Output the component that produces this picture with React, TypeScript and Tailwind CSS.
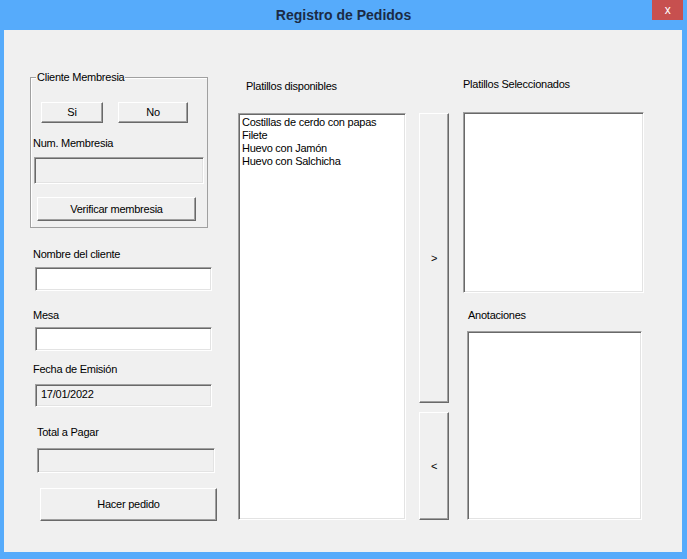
import React from "react";

// classic VBA userform look: raised buttons, sunken text boxes
const btn =
  "flex items-center justify-center bg-[#f0f0f0] border border-t-white border-l-white border-b-[#696969] border-r-[#696969] shadow-[inset_-1px_-1px_0_#a0a0a0] text-[11px] text-black";
const sunken =
  "border border-t-[#a0a0a0] border-l-[#a0a0a0] border-b-white border-r-white shadow-[inset_1px_1px_0_#696969,inset_-1px_-1px_0_#e3e3e3]";

const platillos = [
  "Costillas de cerdo con papas",
  "Filete",
  "Huevo con Jamón",
  "Huevo con Salchicha",
];

function Label({ text, className = "" }: { text: string; className?: string }) {
  return <div className={`h-[13px] leading-[13px] whitespace-nowrap ${className}`}>{text}</div>;
}

export default function App() {
  return (
    <div className="w-[687px] h-[559px] bg-[#56abfb] flex flex-col font-['Liberation_Sans',Arial,sans-serif] text-[11px] leading-[13px] tracking-[-0.25px] text-black">
      {/* title bar */}
      <div className="h-[30px] flex items-start">
        <div className="w-[35px]" />
        <div className="flex-1 h-[30px] flex items-center justify-center text-[14px] font-bold tracking-normal text-[#1b2b45]">
          Registro de Pedidos
        </div>
        <div className="w-[31px] h-[20px] mr-[4px] bg-[#c7504f] flex items-center justify-center text-white text-[12px] leading-none pb-[1px]">
          x
        </div>
      </div>

      {/* client area */}
      <div className="ml-[4px] w-[678px] h-[522px] bg-[#f0f0f0] flex items-start pl-[26px]">
        {/* left column */}
        <div className="w-[190px] flex flex-col">
          <div className="relative mt-[47px] w-[178px] h-[151px] border border-[#a0a0a0] shadow-[inset_1px_1px_0_white] flex flex-col">
            <span className="absolute -top-[7px] left-[5px] px-[1px] bg-[#f0f0f0] leading-[13px]">
              Cliente Membresia
            </span>
            <div className="mt-[24px] ml-[10px] flex gap-[15px]">
              <div className={`${btn} w-[62px] h-[21px]`}>Si</div>
              <div className={`${btn} w-[70px] h-[21px]`}>No</div>
            </div>
            <Label text="Num. Membresia" className="mt-[14px] ml-[2px]" />
            <div className={`${sunken} mt-[7px] ml-[3px] w-[170px] h-[27px] bg-[#f0f0f0]`} />
            <div className={`${btn} mt-[13px] ml-[6px] w-[159px] h-[24px]`}>Verificar membresia</div>
          </div>

          <Label text="Nombre del cliente" className="mt-[20px] ml-[3px]" />
          <div className={`${sunken} mt-[6px] ml-[5px] w-[177px] h-[24px] bg-white`} />

          <Label text="Mesa" className="mt-[18px] ml-[3px]" />
          <div className={`${sunken} mt-[5px] ml-[5px] w-[177px] h-[24px] bg-white`} />

          <Label text="Fecha de Emisión" className="mt-[12px] ml-[3px]" />
          <div className={`${sunken} mt-[8px] ml-[5px] w-[177px] h-[23px] bg-[#f0f0f0] flex items-center pl-[5px] pb-[2px]`}>
            17/01/2022
          </div>

          <Label text="Total a Pagar" className="mt-[19px] ml-[7px]" />
          <div className={`${sunken} mt-[9px] ml-[7px] w-[178px] h-[25px] bg-[#f0f0f0]`} />

          <div className={`${btn} mt-[15px] ml-[10px] w-[177px] h-[33px]`}>Hacer pedido</div>
        </div>

        {/* available dishes */}
        <div className="ml-[17px] w-[169px] flex flex-col">
          <Label text="Platillos disponibles" className="mt-[50px] ml-[9px]" />
          <div className={`${sunken} mt-[20px] ml-[1px] w-[168px] h-[407px] bg-white pt-[2px] pl-[3px] flex flex-col`}>
            {platillos.map((p) => (
              <div key={p} className="leading-[13px] whitespace-nowrap">
                {p}
              </div>
            ))}
          </div>
        </div>

        {/* move buttons */}
        <div className="ml-[13px] w-[30px] flex flex-col">
          <div className={`${btn} mt-[83px] w-[30px] h-[290px]`}>&gt;</div>
          <div className={`${btn} mt-[9px] w-[30px] h-[108px]`}>&lt;</div>
        </div>

        {/* selected dishes + notes */}
        <div className="ml-[14px] w-[181px] flex flex-col">
          <Label text="Platillos Seleccionados" className="mt-[48px]" />
          <div className={`${sunken} mt-[21px] w-[181px] h-[181px] bg-white`} />
          <Label text="Anotaciones" className="mt-[16px] ml-[5px]" />
          <div className={`${sunken} mt-[9px] ml-[4px] w-[175px] h-[189px] bg-white`} />
        </div>
      </div>
    </div>
  );
}
